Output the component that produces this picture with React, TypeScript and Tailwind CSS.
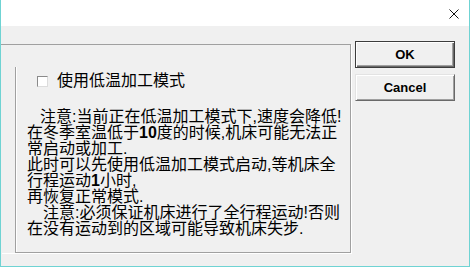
import React from 'react';

const FONT = '"Liberation Sans", "Noto Sans CJK SC", sans-serif';

function Line({ children, indent = 0 }: { children: React.ReactNode; indent?: number }) {
  return (
    <div className="h-[16px] whitespace-nowrap" style={{ paddingLeft: indent }}>
      {children}
    </div>
  );
}

export default function App() {
  return (
    <div
      className="w-[470px] h-[267px] box-border border-x border-b border-[#6fd3d3] bg-[#f0f0f0] flex flex-col overflow-hidden text-black"
      style={{ fontFamily: FONT }}
    >
      {/* Title bar */}
      <div className="h-[26px] bg-white flex justify-end items-start pr-[10px] pt-[9px]">
        <svg width="10" height="10" viewBox="0 0 10 10">
          <path d="M0.5 0.5L9.5 9.5M9.5 0.5L0.5 9.5" stroke="#111" strokeWidth="1" />
        </svg>
      </div>

      <div className="flex items-start">
        {/* Group box */}
        <div className="mt-[18px] w-[350px] h-[209px] box-border border-t border-r border-[#a0a0a0] shadow-[1px_1px_0_#fff] pt-[22px] pl-[14px] flex flex-col">
          <div className="flex-1 border-l border-b border-[#a0a0a0] shadow-[inset_1px_0_0_#fff]">
            <div className="mt-[6px] pl-[21px] flex items-center h-[16px]">
              <span className="w-[11px] h-[11px] box-border border border-t-[#8a8a8a] border-l-[#8a8a8a] border-r-[#dcdcdc] border-b-[#dcdcdc] bg-white" />
              <span className="ml-[9px] text-[16px] leading-[16px]">使用低温加工模式</span>
            </div>

            <div className="mt-[20px] pl-[11px] text-[16px] leading-[16px]">
              <Line indent={13}>注意:当前正在低温加工模式下,速度会降低!</Line>
              <Line>
                在冬季室温低于<span className="font-bold">10</span>度的时候,机床可能无法正
              </Line>
              <Line>常启动或加工.</Line>
              <Line>此时可以先使用低温加工模式启动,等机床全</Line>
              <Line>
                行程运动<span className="font-bold">1</span>小时,
              </Line>
              <Line>再恢复正常模式.</Line>
              <Line indent={16}>注意:必须保证机床进行了全行程运动!否则</Line>
              <Line>在没有运动到的区域可能导致机床失步.</Line>
            </div>
          </div>
        </div>

        {/* Buttons */}
        <div className="mt-[15px] ml-[4px] flex flex-col gap-[6px]">
          <button className="w-[100px] h-[27px] box-border border border-[#3c3c3c] bg-[#f0f0f0] shadow-[inset_1px_1px_0_#fff,inset_-1px_-1px_0_#696969,inset_-2px_-2px_0_#a0a0a0] text-[13px] font-bold leading-none">
            OK
          </button>
          <button className="w-[100px] h-[27px] box-border border border-t-[#e3e3e3] border-l-[#e3e3e3] border-r-[#696969] border-b-[#696969] bg-[#f0f0f0] shadow-[inset_1px_1px_0_#fff,inset_-1px_-1px_0_#a0a0a0] text-[13px] font-bold leading-none">
            Cancel
          </button>
        </div>
      </div>
    </div>
  );
}
